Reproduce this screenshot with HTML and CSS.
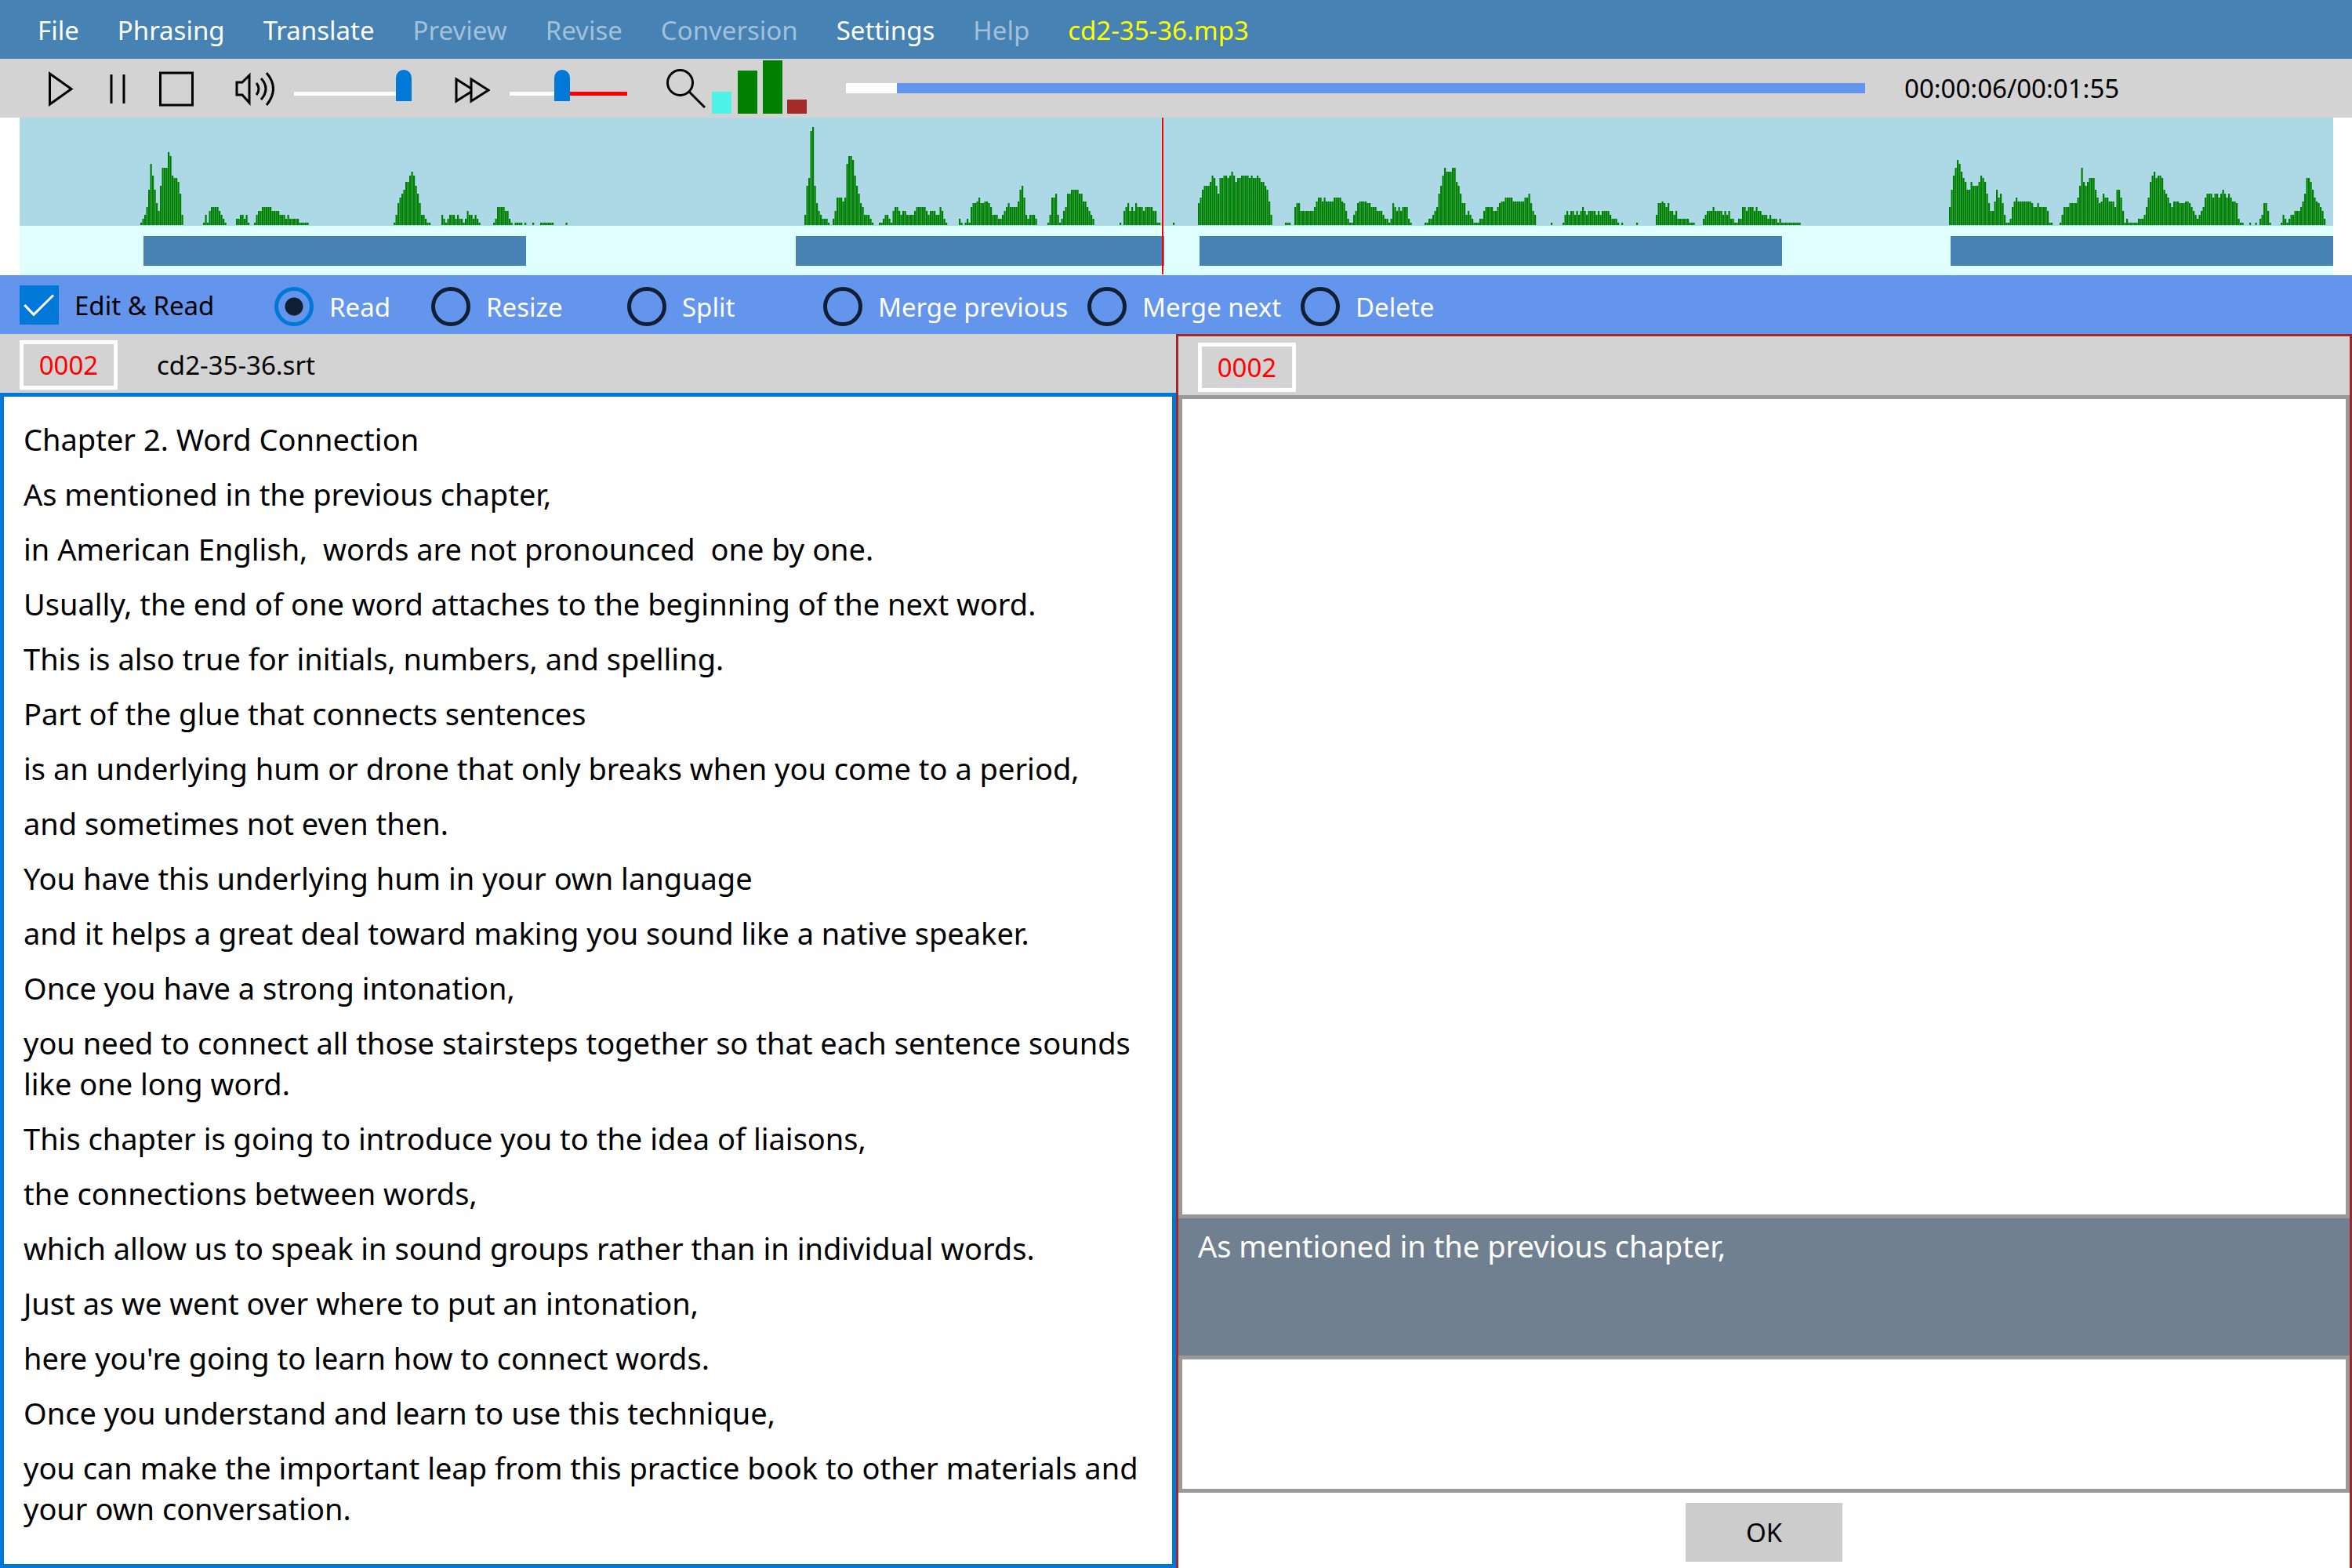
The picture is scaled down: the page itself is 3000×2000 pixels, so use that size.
FILE: index.html
```html
<!DOCTYPE html>
<html lang="en">
<head>
  <meta charset="UTF-8">
  <meta name="viewport" content="width=device-width, initial-scale=1.0">
  <title>cd2-35-36.mp3</title>
  <link rel="stylesheet" href="styles.css">
</head>
<body>

<nav class="menu">
  <button>File</button>
  <button>Phrasing</button>
  <button>Translate</button>
  <button disabled>Preview</button>
  <button disabled>Revise</button>
  <button disabled>Conversion</button>
  <button>Settings</button>
  <button disabled>Help</button>
  <span class="media-name">cd2-35-36.mp3</span>
</nav>

<div class="toolbar">
  <div class="transport">
    <button class="icon" aria-label="Play"><svg width="50" height="50" viewBox="0 0 50 50"><path d="M13.5 6V45L41 25.5Z"/></svg></button>
    <button class="icon" aria-label="Pause"><svg width="50" height="50" viewBox="0 0 50 50"><path d="M17 7V44M33 7V44"/></svg></button>
    <button class="icon" aria-label="Stop"><svg width="50" height="50" viewBox="0 0 50 50"><path d="M4.5 5H45.5V46H4.5Z"/></svg></button>
  </div>
  <div class="level">
    <label class="icon" for="volume" aria-label="Volume"><svg width="50" height="50" viewBox="0 0 50 50"><path d="M2 17H9L18 8V43L9 33H2ZM27 18Q33 25 27 33M33 12Q45 25 33 39M40 5Q57 25 40 46"/></svg></label>
    <input type="range" class="volume" id="volume" min="0" max="100" value="100">
  </div>
  <div class="level">
    <label class="icon" for="speed" aria-label="Speed"><svg width="50" height="50" viewBox="0 0 50 50"><path d="M26 25L7 13V41L26 29M26 13V41L48 27Z"/></svg></label>
    <input type="range" class="speed" id="speed" min="0" max="100" value="44">
  </div>
  <div class="zoom">
    <button class="icon" aria-label="Zoom"><svg width="50" height="50" viewBox="0 0 50 50"><circle cx="17.5" cy="17.5" r="16"/><path d="M29 29L49 49"/></svg></button>
    <svg width="121" height="71" viewBox="0 0 121 71">
      <rect x="0" y="40" width="25" height="28" fill="#4df3e8"/>
      <rect x="33" y="13" width="25" height="55" fill="green"/>
      <rect x="65" y="0" width="25" height="68" fill="green"/>
      <rect x="96" y="50" width="25" height="18" fill="brown"/>
    </svg>
  </div>
  <progress class="position" value="5" max="100" aria-label="Position"></progress>
  <div class="time">00:00:06/00:01:55</div>
</div>

<div class="wave">
  <svg viewBox="0 0 2951 201" preserveAspectRatio="none">
    <rect class="wave-bg" width="2951" height="138"/>
    <rect class="phrase-bg" y="138" width="2951" height="63"/>
    <path class="samples" id="samples"/>
    <g class="phrases">
      <rect x="158" y="151" width="488" height="38"/>
      <rect x="990" y="151" width="470" height="38"/>
      <rect x="1505" y="151" width="743" height="38"/>
      <rect x="2463" y="151" width="488" height="38"/>
    </g>
    <rect class="playhead" x="1457" width="2" height="200"/>
  </svg>
</div>

<div class="options">
  <label class="edit"><input type="checkbox" checked>Edit &amp; Read</label>
  <label class="short"><input type="radio" name="mode" checked>Read</label>
  <label><input type="radio" name="mode">Resize</label>
  <label><input type="radio" name="mode">Split</label>
  <label class="long"><input type="radio" name="mode">Merge previous</label>
  <label class="medium"><input type="radio" name="mode">Merge next</label>
  <label><input type="radio" name="mode">Delete</label>
</div>

<main class="panels">
  <section class="source">
    <header>
      <button class="number">0002</button>
      <span>cd2-35-36.srt</span>
    </header>
    <ul class="lines">
      <li>Chapter 2. Word Connection</li>
      <li>As mentioned in the previous chapter,</li>
      <li>in American English,  words are not pronounced  one by one.</li>
      <li>Usually, the end of one word attaches to the beginning of the next word.</li>
      <li>This is also true for initials, numbers, and spelling.</li>
      <li>Part of the glue that connects sentences</li>
      <li>is an underlying hum or drone that only breaks when you come to a period,</li>
      <li>and sometimes not even then.</li>
      <li>You have this underlying hum in your own language</li>
      <li>and it helps a great deal toward making you sound like a native speaker.</li>
      <li>Once you have a strong intonation,</li>
      <li>you need to connect all those stairsteps together so that each sentence sounds like one long word.</li>
      <li>This chapter is going to introduce you to the idea of liaisons,</li>
      <li>the connections between words,</li>
      <li>which allow us to speak in sound groups rather than in individual words.</li>
      <li>Just as we went over where to put an intonation,</li>
      <li>here you're going to learn how to connect words.</li>
      <li>Once you understand and learn to use this technique,</li>
      <li>you can make the important leap from this practice book to other materials and your own conversation.</li>
    </ul>
  </section>

  <section class="translation">
    <header>
      <button class="number">0002</button>
    </header>
    <textarea class="translated" aria-label="Translation"></textarea>
    <p class="current">As mentioned in the previous chapter,</p>
    <textarea class="entry" aria-label="Current line"></textarea>
    <footer><button class="ok">OK</button></footer>
  </section>
</main>

<script src="wave.js"></script>
</body>
</html>
```
FILE: styles.css
```css
* {
  box-sizing: border-box;
}
body {
  margin: 0;
  height: 100vh;
  display: flex;
  flex-direction: column;
  font-family: "Noto Sans", "Open Sans", sans-serif;
  font-size: 33px;
  color: black;
  background: white;
}
button, textarea {
  font: inherit;
  color: inherit;
  margin: 0;
}
button {
  border: none;
  background: none;
  padding: 0;
}
svg {
  display: block;
}

/* menu */
.menu {
  height: 75px;
  flex: none;
  display: flex;
  align-items: center;
  gap: 49px;
  padding: 2px 48px 0;
  background: steelblue;
  color: white;
}
.menu button:disabled {
  color: #a2c0d9;
}
.media-name {
  color: yellow;
}

/* toolbar */
.toolbar {
  height: 75px;
  flex: none;
  display: flex;
  align-items: center;
  padding: 0 50px;
  background: lightgray;
}
.icon {
  width: 50px;
  height: 50px;
}
.icon svg {
  fill: none;
  stroke: black;
  stroke-width: 3;
}
.transport {
  display: flex;
  gap: 25px;
  margin-right: 50px;
}
.level {
  display: flex;
  align-items: center;
  gap: 25px;
  margin-right: 50px;
}
.level input {
  appearance: none;
  width: 150px;
  height: 50px;
  margin: 0;
  background: linear-gradient(white, white) 0 29px / 100% 5px no-repeat;
}
.level .speed {
  background-image: linear-gradient(to right, white 50%, red 50%);
}
.level input::-webkit-slider-thumb {
  appearance: none;
  width: 20px;
  height: 40px;
  margin-top: -8px;
  border-radius: 10px 10px 0 0;
  background: #0078d7;
}
.zoom {
  display: flex;
  align-items: center;
  gap: 8px;
  margin-right: 50px;
}
.position {
  appearance: none;
  flex: 1;
  height: 13px;
  border: none;
}
.position::-webkit-progress-bar {
  background: cornflowerblue;
}
.position::-webkit-progress-value {
  background: white;
}
.time {
  width: 571px;
  padding-left: 50px;
}

/* waveform */
.wave {
  flex: none;
  padding: 0 24px 0 25px;
}
.wave svg {
  width: 100%;
  height: 201px;
}
.wave-bg {
  fill: lightblue;
}
.phrase-bg {
  fill: lightcyan;
}
.samples {
  fill: green;
}
.phrases {
  fill: steelblue;
}
.playhead {
  fill: red;
}

/* mode */
.options {
  height: 75px;
  flex: none;
  display: flex;
  align-items: center;
  padding: 5px 25px 0;
  background: cornflowerblue;
  color: white;
}
.options label {
  display: flex;
  align-items: center;
  gap: 20px;
  width: 250px;
  white-space: nowrap;
}
.options .edit {
  width: 325px;
  padding-bottom: 4px;
  color: black;
}
.options .short {
  width: 200px;
}
.options .medium {
  width: 272px;
}
.options .long {
  width: 337px;
}
.options input {
  appearance: none;
  flex: none;
  width: 50px;
  height: 50px;
  margin: 0;
}
.options input[type="radio"] {
  border: 5px solid #101f33;
  border-radius: 50%;
}
.options input[type="radio"]:checked {
  border-color: #0078d7;
  background: radial-gradient(circle, #101f33 11px, transparent 12px);
}
.options input[type="checkbox"] {
  background: #0078d7;
}
.options input[type="checkbox"]::before {
  content: "";
  display: block;
  width: 50px;
  height: 50px;
  background: white;
  clip-path: polygon(10% 52%, 15% 48%, 36% 70%, 84% 23%, 88% 27%, 36% 79%);
}

/* panels */
.panels {
  flex: 1;
  min-height: 0;
  display: grid;
  grid-template-columns: 1fr 1fr;
}
.panels section {
  display: flex;
  flex-direction: column;
  min-height: 0;
}
.panels header {
  height: 75px;
  flex: none;
  display: flex;
  align-items: center;
  gap: 50px;
  padding: 3px 25px 0;
  background: lightgray;
}
.number {
  width: 125px;
  height: 63px;
  border: 5px solid white;
  color: red;
}
.lines {
  flex: 1;
  margin: 0;
  padding: 19px 25px;
  border: 5px solid #0078d7;
  list-style: none;
  font-size: 38px;
  line-height: 52px;
}
.lines li {
  padding: 9px 0;
  white-space: pre-wrap;
}
.translation {
  border: 3px solid #a02828;
  border-bottom: none;
}
.translation textarea {
  display: block;
  resize: none;
  border: 5px solid #999;
  padding: 10px 20px;
  font-size: 38px;
  outline: none;
}
.translated {
  flex: 1;
}
.current {
  height: 175px;
  margin: 0;
  padding: 9px 25px;
  background: slategray;
  color: white;
  font-size: 38px;
  line-height: 52px;
}
.entry {
  height: 175px;
}
.translation footer {
  display: flex;
  justify-content: center;
  padding: 13px 0 8px;
}
.ok {
  width: 200px;
  height: 75px;
  background: #ccc;
}
```
FILE: wave.js
```js
// bar heights, indexed by the characters used below
const levels = [0, 3, 8, 13, 18, 23, 28, 30, 35, 40, 45, 50, 55, 60, 63, 68, 73, 78, 83, 88, 93, 120, 125];
const step = 2.5;
const base = 137;

// [start, one level per bar]
const bursts = [
  [154, '1235ahea64bgggkjeddc93'],
  [234, '131455554321'],
  [276, '2233231'],
  [299, '1344555554444333232222211111'],
  [477, '13689accefeb9633211'],
  [538, '32123332322124332321'],
  [604, '12555544210111101000100011111110000001'],
  [1001, '3bdlmb6432221'],
  [1037, '2488878hjjieb96533321'],
  [1096, '11233214554344333345555543444335421'],
  [1198, '2101215667866776533322345655557ab8323332'],
  [1311, '138893124599aaaa99775432'],
  [1403, '104564546555455554411'],
  [1471, '1'],
  [1503, '68abbbcedb9ddeedefecddeeeededdedccba73'],
  [1614, '111'],
  [1626, '566444444457887877778888764211346777766555444322126545455521'],
  [1792, '11223459begfffggcb966343211122455554456778888777777889643'],
  [1953, '1'],
  [1968, '1343443434543444434344443222101'],
  [2062, '1'],
  [2087, '36676564434222222111'],
  [2147, '23444544443434221122554555454433323222121111111111'],
  [2461, '5aegihfdcaacbbbcedc96447a8963112578777777765565555411'],
  [2602, '1355566668bgcbcddda8679887775aa841211111222358cefdeeda98657776667765432345899989989a9898776211'],
  [2844, '1001'],
  [2857, '236641'],
  [2884, '13212334445' + '79ddca876542']
];

let d = '';
for (const [start, heights] of bursts) {
  [...heights].forEach((c, i) => {
    const h = levels[parseInt(c, 36)];
    if (h) d += `M${start + i * step} ${base}v${-h}h2.2v${h}z`;
  });
}
document.getElementById('samples').setAttribute('d', d);
```
